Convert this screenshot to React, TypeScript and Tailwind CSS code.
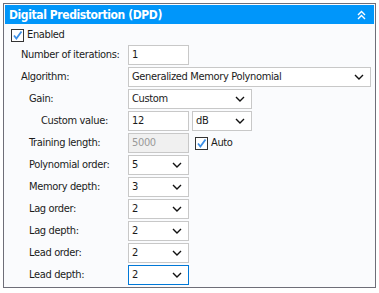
import React from "react";

function Chevron() {
  return (
    <svg width="10" height="6" viewBox="0 0 10 6" fill="none" stroke="#111" strokeWidth="1.4">
      <path d="M1 1l4 4 4-4" />
    </svg>
  );
}

function DoubleChevronUp() {
  return (
    <svg width="9" height="10" viewBox="0 0 9 10" fill="none" stroke="#fff" strokeWidth="1.4">
      <path d="M1 5l3.5-3.5L8 5" />
      <path d="M1 9l3.5-3.5L8 9" />
    </svg>
  );
}

function Check() {
  return (
    <span className="flex h-[13px] w-[13px] shrink-0 items-center justify-center border border-[#333] bg-white">
      <svg width="11" height="11" viewBox="0 0 11 11" fill="none" stroke="#3c8fe6" strokeWidth="1.8">
        <path d="M2 5.5l2.4 3L9.5 1.5" />
      </svg>
    </span>
  );
}

function Select({ value, width, focus }: { value: string; width: string; focus?: boolean }) {
  return (
    <div
      className={`flex h-[20px] ${width} items-center justify-between border bg-white pl-[3px] pr-[6px] ${
        focus ? "border-[#0078d7]" : "border-[#c8c8c8]"
      }`}
    >
      <span className="whitespace-nowrap">{value}</span>
      <Chevron />
    </div>
  );
}

function Input({ value, disabled }: { value: string; disabled?: boolean }) {
  return (
    <div
      className={`flex h-[20px] w-[61px] items-center border border-[#c8c8c8] pl-[3px] ${
        disabled ? "bg-[#f0f0f0] text-[#9a9a9a]" : "bg-white"
      }`}
    >
      {value}
    </div>
  );
}

function Row({ label, indent, children }: { label: string; indent: string; children: React.ReactNode }) {
  return (
    <div className="flex h-[20px] items-center">
      <div className={`w-[123px] shrink-0 whitespace-nowrap ${indent}`}>{label}</div>
      <div className="flex items-center gap-[3px]">{children}</div>
    </div>
  );
}

export default function App() {
  return (
    <div
      className="h-[293px] w-[379px] bg-white pl-[3px] pt-[3px] text-[11px] tracking-[-0.35px] text-[#1b1b1b]"
      style={{ fontFamily: '"DejaVu Sans Condensed", "Liberation Sans", Arial, sans-serif' }}
    >
      <div className="flex h-[285px] w-[373px] flex-col border border-[#6e6e78] bg-[#fafbfd] px-[1px] pt-[1px]">
        <div className="flex h-[19px] items-center justify-between bg-[#0096fa] pl-[4px] pr-[8px] text-[12px] font-bold tracking-[-0.4px] text-white">
          <span>Digital Predistortion (DPD)</span>
          <DoubleChevronUp />
        </div>
        <div className="flex h-[19px] items-center gap-[3px] pl-[6px] pt-[3px]">
          <Check />
          <span>Enabled</span>
        </div>
        <div className="mt-[2px] flex flex-col gap-[2px]">
          <Row label="Number of iterations:" indent="pl-[16px]">
            <Input value="1" />
          </Row>
          <Row label="Algorithm:" indent="pl-[16px]">
            <Select value="Generalized Memory Polynomial" width="w-[243px]" />
          </Row>
          <Row label="Gain:" indent="pl-[24px]">
            <Select value="Custom" width="w-[124px]" />
          </Row>
          <Row label="Custom value:" indent="pl-[36px]">
            <Input value="12" />
            <Select value="dB" width="w-[60px]" />
          </Row>
          <Row label="Training length:" indent="pl-[24px]">
            <Input value="5000" disabled />
            <div className="ml-[3px] flex items-center gap-[3px]">
              <Check />
              <span>Auto</span>
            </div>
          </Row>
          <Row label="Polynomial order:" indent="pl-[24px]">
            <Select value="5" width="w-[61px]" />
          </Row>
          <Row label="Memory depth:" indent="pl-[24px]">
            <Select value="3" width="w-[61px]" />
          </Row>
          <Row label="Lag order:" indent="pl-[24px]">
            <Select value="2" width="w-[61px]" />
          </Row>
          <Row label="Lag depth:" indent="pl-[24px]">
            <Select value="2" width="w-[61px]" />
          </Row>
          <Row label="Lead order:" indent="pl-[24px]">
            <Select value="2" width="w-[61px]" />
          </Row>
          <Row label="Lead depth:" indent="pl-[24px]">
            <Select value="2" width="w-[61px]" focus />
          </Row>
        </div>
      </div>
    </div>
  );
}
